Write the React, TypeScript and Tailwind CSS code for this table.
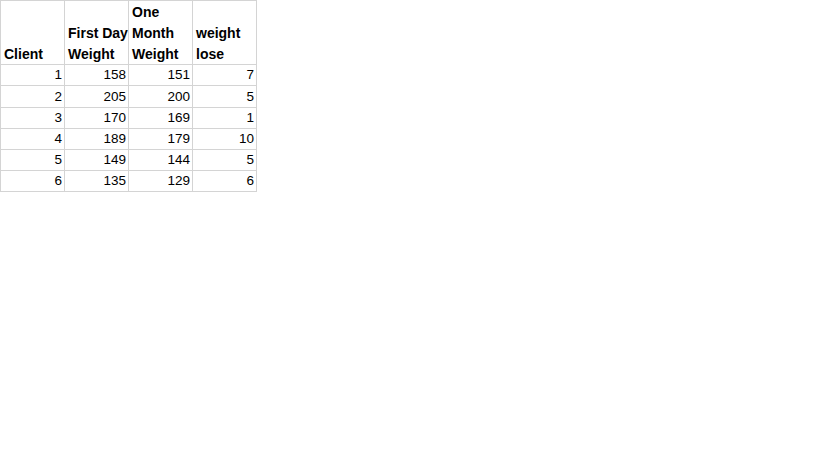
import React from "react";

const rows = [
  [1, 158, 151, 7],
  [2, 205, 200, 5],
  [3, 170, 169, 1],
  [4, 189, 179, 10],
  [5, 149, 144, 5],
  [6, 135, 129, 6],
];

const heights = ["h-[21px]", "h-[22px]", "h-[21px]", "h-[21px]", "h-[21px]", "h-[21px]"];

export default function App() {
  const headers = [["Client"], ["First Day", "Weight"], ["One", "Month", "Weight"], ["weight", "lose"]];
  return (
    <div className="w-[819px] h-[460px] bg-white text-black" style={{ fontFamily: '"Liberation Sans", Arial, sans-serif' }}>
      <div className="inline-flex flex-col border-l border-t border-[#d4d4d4]">
        <div className="flex h-[64px]">
          {headers.map((h, i) => (
            <div key={i} className="w-[64px] border-r border-b border-[#d4d4d4] flex flex-col justify-end pl-[3px] text-[14px] font-bold leading-[21px]">
              {h.map((l) => (
                <div key={l} className="whitespace-nowrap translate-y-[1px]">{l}</div>
              ))}
            </div>
          ))}
        </div>
        {rows.map((r, ri) => (
          <div key={ri} className={`flex ${heights[ri]}`}>
            {r.map((v, ci) => (
              <div key={ci} className="w-[64px] border-r border-b border-[#d4d4d4] flex items-center justify-end pr-[2px] pt-[1px] text-[13.5px]">
                {v}
              </div>
            ))}
          </div>
        ))}
      </div>
    </div>
  );
}
